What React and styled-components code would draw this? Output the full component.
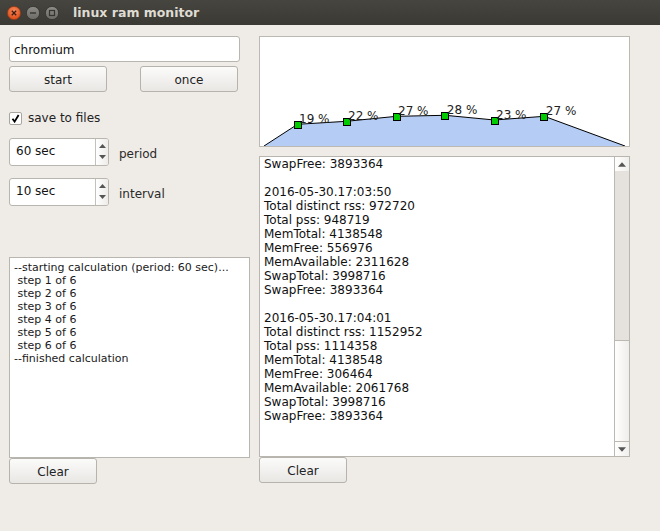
import React from "react";
import styled, { createGlobalStyle } from "styled-components";

const Global = createGlobalStyle`
  html, body { margin: 0; padding: 0; background: #efebe7; }
  body { font-family: "DejaVu Sans", "Liberation Sans", sans-serif; }
`;

const Window = styled.div`
  width: 660px;
  height: 531px;
  overflow: hidden;
  background: #efebe7;
  display: flex;
  flex-direction: column;
`;

const TitleBar = styled.div`
  height: 25px;
  flex: none;
  display: flex;
  align-items: center;
  padding-left: 7px;
  background: linear-gradient(#46453f, #3a3934);
`;

const WinButtons = styled.div`
  display: flex;
  gap: 5px;
  margin-right: 14px;
`;

const WinBtn = styled.svg`
  width: 14px;
  height: 14px;
  display: block;
`;

const Title = styled.div`
  font-family: "DejaVu Sans", sans-serif;
  font-weight: bold;
  font-size: 12.5px;
  color: #dfdbd2;
  margin-top: -1px;
`;

const Body = styled.div`
  display: flex;
  gap: 10px;
  padding: 11px 0 0 9px;
`;

const LeftCol = styled.div`
  width: 240px;
  display: flex;
  flex-direction: column;
`;

const RightCol = styled.div`
  width: 371px;
  display: flex;
  flex-direction: column;
`;

const TextInput = styled.div`
  box-sizing: border-box;
  width: 231px;
  height: 26px;
  background: #fff;
  border: 1px solid #b9b5af;
  border-radius: 3px;
  display: flex;
  align-items: center;
  padding-left: 4px;
  padding-top: 1px;
  font-size: 12px;
  color: #111;
`;

const ButtonRow = styled.div`
  display: flex;
  justify-content: space-between;
  width: 229px;
  margin-top: 4px;
`;

const Button = styled.div`
  box-sizing: border-box;
  width: ${(p) => p.$w}px;
  height: 26px;
  border: 1px solid #b6b2ac;
  border-radius: 3px;
  background: linear-gradient(#fbfbfa, #e9e7e4);
  display: flex;
  align-items: center;
  justify-content: center;
  padding-top: 1px;
  font-size: 12px;
  color: #222;
`;

const CheckRow = styled.div`
  display: flex;
  align-items: center;
  gap: 6px;
  margin-top: 19px;
  font-size: 12px;
  color: #222;
`;

const CheckBox = styled.div`
  box-sizing: border-box;
  width: 13px;
  height: 13px;
  background: #fff;
  border: 1px solid #a9a59f;
  border-radius: 2px;
  display: flex;
  align-items: center;
  justify-content: center;
`;

const SpinRow = styled.div`
  display: flex;
  align-items: center;
  margin-top: ${(p) => p.$mt}px;
`;

const Spin = styled.div`
  box-sizing: border-box;
  width: 100px;
  height: 28px;
  border: 1px solid #b9b5af;
  border-radius: 3px;
  background: #fff;
  display: flex;
  overflow: hidden;
`;

const SpinField = styled.div`
  flex: 1;
  display: flex;
  align-items: center;
  padding-left: 6px;
  padding-bottom: 2px;
  font-size: 12px;
  color: #111;
`;

const SpinArrows = styled.div`
  width: 12px;
  border-left: 1px solid #c4c0ba;
  background: linear-gradient(to right, #ffffff, #eeece9);
  display: flex;
  flex-direction: column;
  justify-content: space-between;
  align-items: center;
  padding: 5px 0 6px;
`;

const Arrow = styled.svg`
  width: 7px;
  height: 4px;
  display: block;
`;

const SpinLabel = styled.div`
  margin-left: 10px;
  margin-top: 4px;
  font-size: 12px;
  color: #2a2a2a;
`;

const LogBox = styled.div`
  box-sizing: border-box;
  width: 241px;
  height: 201px;
  margin-top: 51px;
  background: #fff;
  border: 1px solid #b9b5af;
  padding: 3px 4px;
  font-size: 11px;
  line-height: 13px;
  color: #1a1a1a;
  white-space: pre;
  overflow: hidden;
`;

const ChartBox = styled.div`
  box-sizing: border-box;
  height: 111px;
  background: #fff;
  border: 1px solid #bcb8b2;
`;

const ChartSvg = styled.svg`
  display: block;
  width: 369px;
  height: 109px;
`;

const TextPanel = styled.div`
  box-sizing: border-box;
  height: 301px;
  margin-top: 9px;
  background: #fff;
  border: 1px solid #b9b5af;
  display: flex;
`;

const TextContent = styled.div`
  flex: 1;
  overflow: hidden;
  padding: 0 4px;
  font-size: 12px;
  line-height: 14px;
  color: #111;
  white-space: pre;
`;

const ScrollBar = styled.div`
  width: 14px;
  border-left: 1px solid #bcb8b2;
  display: flex;
  flex-direction: column;
`;

const ScrollBtn = styled.div`
  height: 14px;
  flex: none;
  background: linear-gradient(to right, #ffffff, #f1efec);
  display: flex;
  align-items: center;
  justify-content: center;
  ${(p) => (p.$down ? "border-top: 1px solid #bcb8b2;" : "")}
`;

const Track = styled.div`
  flex: 1;
  background: #e5e2de;
`;

const Handle = styled.div`
  height: 100px;
  flex: none;
  border-top: 1px solid #bcb8b2;
  background: linear-gradient(to right, #ffffff, #efedea);
`;

const LOG = `--starting calculation (period: 60 sec)...
 step 1 of 6
 step 2 of 6
 step 3 of 6
 step 4 of 6
 step 5 of 6
 step 6 of 6
--finished calculation`;

const MEM = `SwapFree: 3893364

2016-05-30.17:03:50
Total distinct rss: 972720
Total pss: 948719
MemTotal: 4138548
MemFree: 556976
MemAvailable: 2311628
SwapTotal: 3998716
SwapFree: 3893364

2016-05-30.17:04:01
Total distinct rss: 1152952
Total pss: 1114358
MemTotal: 4138548
MemFree: 306464
MemAvailable: 2061768
SwapTotal: 3998716
SwapFree: 3893364`;

const POINTS = [
  { x: 37.5, y: 88.3, label: "19 %" },
  { x: 86.5, y: 85.3, label: "22 %" },
  { x: 136.5, y: 80.3, label: "27 %" },
  { x: 185.3, y: 79.3, label: "28 %" },
  { x: 234.5, y: 84, label: "23 %" },
  { x: 284.3, y: 80.3, label: "27 %" },
];

function Chart() {
  const line = [[4, 109], ...POINTS.map((p) => [p.x, p.y - 1]), [365, 109]];
  const pts = line.map((p) => p.join(",")).join(" ");
  return (
    <ChartSvg viewBox="0 0 369 109">
      <polygon points={pts} fill="#b5cdf4" />
      <polyline points={pts} fill="none" stroke="#000" strokeWidth="1" />
      {POINTS.map((p, i) => (
        <g key={i}>
          <rect
            x={Math.round(p.x - 4) + 0.5}
            y={Math.round(p.y - 4) + 0.5}
            width="7"
            height="7"
            fill="#00cc00"
            stroke="#000"
            strokeWidth="1"
          />
          <text
            x={p.x + 1.5}
            y={p.y - 2.5}
            fontSize="12"
            fontFamily="DejaVu Sans, sans-serif"
            fill="#222"
          >
            {p.label}
          </text>
        </g>
      ))}
    </ChartSvg>
  );
}

function UpArrow({ w = 7, h = 4 }) {
  return (
    <Arrow viewBox="0 0 7 4" style={{ width: w, height: h }}>
      <polygon points="0,4 3.5,0 7,4" fill="#555" />
    </Arrow>
  );
}
function DownArrow({ w = 7, h = 4 }) {
  return (
    <Arrow viewBox="0 0 7 4" style={{ width: w, height: h }}>
      <polygon points="0,0 7,0 3.5,4" fill="#555" />
    </Arrow>
  );
}

function SpinBox({ value, label, mt }) {
  return (
    <SpinRow $mt={mt}>
      <Spin>
        <SpinField>{value}</SpinField>
        <SpinArrows>
          <UpArrow />
          <DownArrow />
        </SpinArrows>
      </Spin>
      <SpinLabel>{label}</SpinLabel>
    </SpinRow>
  );
}

export default function App() {
  return (
    <Window>
      <Global />
      <TitleBar>
        <WinButtons>
          <WinBtn viewBox="0 0 14 14">
            <defs>
              <radialGradient id="cg" cx="50%" cy="35%" r="60%">
                <stop offset="0%" stopColor="#f58a5c" />
                <stop offset="100%" stopColor="#df4f1c" />
              </radialGradient>
            </defs>
            <circle cx="7" cy="7" r="6.6" fill="url(#cg)" stroke="#8e3a16" strokeWidth="0.7" />
            <path d="M4.8 4.8 L9.2 9.2 M9.2 4.8 L4.8 9.2" stroke="#3b1c10" strokeWidth="1.3" />
          </WinBtn>
          <WinBtn viewBox="0 0 14 14">
            <defs>
              <linearGradient id="gg" x1="0" y1="0" x2="0" y2="1">
                <stop offset="0%" stopColor="#8d8c87" />
                <stop offset="100%" stopColor="#6c6b66" />
              </linearGradient>
            </defs>
            <circle cx="7" cy="7" r="6.6" fill="url(#gg)" stroke="#2e2d29" strokeWidth="0.7" />
            <path d="M4 7 H10" stroke="#35342f" strokeWidth="1.4" />
          </WinBtn>
          <WinBtn viewBox="0 0 14 14">
            <circle cx="7" cy="7" r="6.6" fill="url(#gg)" stroke="#2e2d29" strokeWidth="0.7" />
            <rect x="4.5" y="4.5" width="5" height="5" fill="none" stroke="#35342f" strokeWidth="1.2" />
          </WinBtn>
        </WinButtons>
        <Title>linux ram monitor</Title>
      </TitleBar>
      <Body>
        <LeftCol>
          <TextInput>chromium</TextInput>
          <ButtonRow>
            <Button $w={98}>start</Button>
            <Button $w={98}>once</Button>
          </ButtonRow>
          <CheckRow>
            <CheckBox>
              <svg width="9" height="9" viewBox="0 0 9 9">
                <path d="M1.5 4.8 L3.6 7.6 L7.6 1" fill="none" stroke="#000" strokeWidth="1.8" />
              </svg>
            </CheckBox>
            save to files
          </CheckRow>
          <SpinBox value="60 sec" label="period" mt={13} />
          <SpinBox value="10 sec" label="interval" mt={12} />
          <LogBox>{LOG}</LogBox>
          <Button $w={88}>Clear</Button>
        </LeftCol>
        <RightCol>
          <ChartBox>
            <Chart />
          </ChartBox>
          <TextPanel>
            <TextContent>{MEM}</TextContent>
            <ScrollBar>
              <ScrollBtn>
                <UpArrow w={8} h={5} />
              </ScrollBtn>
              <Track />
              <Handle />
              <ScrollBtn $down>
                <DownArrow w={8} h={5} />
              </ScrollBtn>
            </ScrollBar>
          </TextPanel>
          <Button $w={88}>Clear</Button>
        </RightCol>
      </Body>
    </Window>
  );
}
